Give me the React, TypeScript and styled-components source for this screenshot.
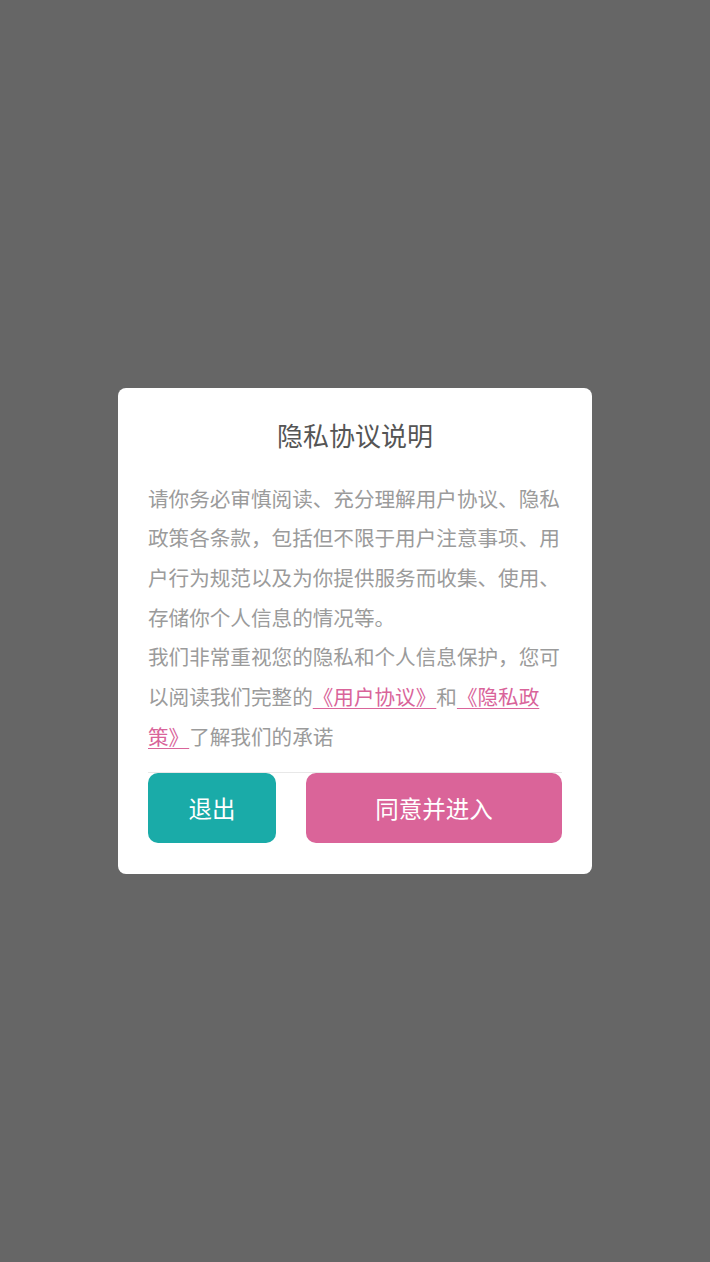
import React from "react";
import styled, { createGlobalStyle } from "styled-components";

const GlobalStyle = createGlobalStyle`
  html, body {
    margin: 0;
    padding: 0;
  }
  body {
    font-family: "Noto Sans CJK SC", "Noto Sans", sans-serif;
  }
  * { box-sizing: border-box; }
`;

const Overlay = styled.div`
  width: 100vw;
  height: 100vh;
  background: #666666;
  display: flex;
  align-items: center;
  justify-content: center;
`;

const Dialog = styled.div`
  width: 474px;
  background: #ffffff;
  border-radius: 8px;
  padding: 30px 30px 31px;
  display: flex;
  flex-direction: column;
`;

const Title = styled.h2`
  margin: 0 0 27px;
  font-size: 26px;
  line-height: 34px;
  font-weight: 400;
  color: #555555;
  text-align: center;
`;

const Body = styled.div`
  font-size: 20.6px;
  line-height: 39.7px;
  color: #9b9b9b;
  padding-bottom: 16px;
  border-bottom: 1px solid #e8e8e8;
`;

const Para = styled.p`
  margin: 0;
`;

const Link = styled.a`
  color: #d9649a;
  text-decoration: underline;
  text-underline-offset: 3px;
  text-decoration-thickness: 1px;
  cursor: pointer;
`;

const Actions = styled.div`
  display: grid;
  grid-template-columns: 128px 1fr;
  gap: 30px;
`;

const Button = styled.button<{ $tone: "exit" | "agree" }>`
  height: 70px;
  border: none;
  border-radius: 10px;
  background: ${(p) => (p.$tone === "exit" ? "#1aaba8" : "#da6499")};
  color: #ffffff;
  font-family: "Noto Sans CJK SC", "Noto Sans", sans-serif;
  font-size: 23.5px;
  cursor: pointer;
  padding: 0;
`;

export default function App() {
  return (
    <>
      <GlobalStyle />
      <Overlay>
        <Dialog>
          <Title>隐私协议说明</Title>
          <Body>
            <Para>
              请你务必审慎阅读、充分理解用户协议、隐私政策各条款，包括但不限于用户注意事项、用户行为规范以及为你提供服务而收集、使用、存储你个人信息的情况等。
            </Para>
            <Para>
              我们非常重视您的隐私和个人信息保护，您可以阅读我们完整的
              <Link>《用户协议》</Link>和<Link>《隐私政策》</Link>了解我们的承诺
            </Para>
          </Body>
          <Actions>
            <Button $tone="exit">退出</Button>
            <Button $tone="agree">同意并进入</Button>
          </Actions>
        </Dialog>
      </Overlay>
    </>
  );
}
